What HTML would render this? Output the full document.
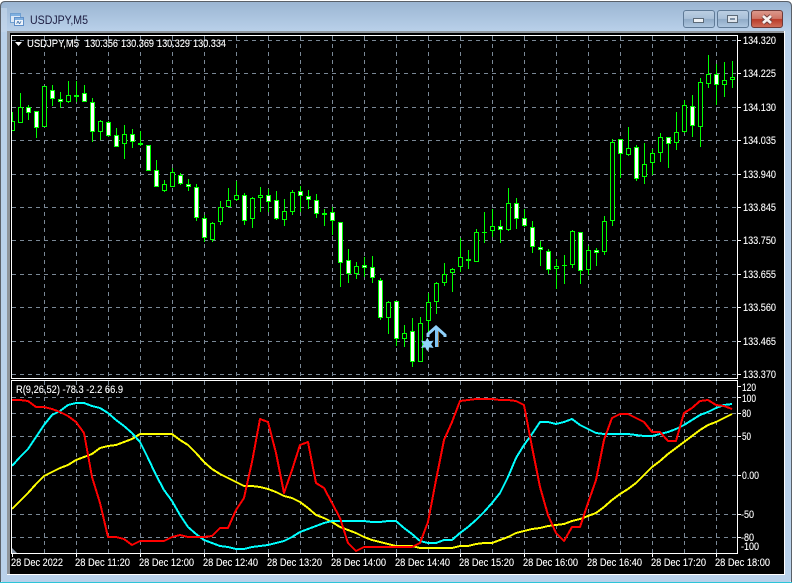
<!DOCTYPE html>
<html>
<head>
<meta charset="utf-8">
<title>USDJPY,M5</title>
<style>
html,body{margin:0;padding:0;background:#fff;width:795px;height:583px;overflow:hidden}
svg{display:block;position:absolute;left:0;top:0}
text{font-family:"Liberation Sans",sans-serif;font-size:11px;fill:#fff;stroke:#fff;stroke-width:.12px}
</style>
</head>
<body>
<svg width="795" height="583" viewBox="0 0 795 583" xmlns="http://www.w3.org/2000/svg">
<defs>
<linearGradient id="tb" x1="0" y1="0" x2="0" y2="1"><stop offset="0" stop-color="#9ab5d2"/><stop offset="1" stop-color="#bad1ea"/></linearGradient>
<linearGradient id="btn" x1="0" y1="0" x2="0" y2="1"><stop offset="0" stop-color="#bccfe3"/><stop offset=".48" stop-color="#a9c0d8"/><stop offset=".52" stop-color="#8fabc7"/><stop offset="1" stop-color="#b0c8e0"/></linearGradient>
<linearGradient id="cl" x1="0" y1="0" x2="0" y2="1"><stop offset="0" stop-color="#dc9a8e"/><stop offset=".48" stop-color="#cf7565"/><stop offset=".52" stop-color="#b93a28"/><stop offset="1" stop-color="#d0705c"/></linearGradient>
<clipPath id="mc"><rect x="12" y="36" width="725" height="342"/></clipPath>
<clipPath id="ic"><rect x="12" y="381" width="725" height="172"/></clipPath>
</defs>

<!-- window frame -->
<rect x="0" y="1" width="792" height="582" rx="5" fill="#b9d1ea"/>
<rect x="0" y="1" width="792" height="31" rx="5" fill="url(#tb)"/>
<path d="M0.5 583V6.5Q0.5 1.5 5.5 1.5H786.5Q791.5 1.5 791.5 6.5V583" fill="none" stroke="#5a6068"/>
<rect x="1" y="8" width="6" height="24" fill="#c3d6ea" opacity=".7"/>
<rect x="0" y="582" width="792" height="1" fill="#2cc4d8"/>

<!-- client -->
<rect x="7" y="31" width="778" height="544" fill="#fff"/>
<rect x="7" y="31" width="777" height="2" fill="#8f959b"/>
<rect x="7" y="31" width="3" height="543" fill="#8f959b"/>
<rect x="10" y="33" width="774" height="541" fill="#000"/>

<!-- grid -->
<g shape-rendering="crispEdges" stroke="#7a8896" stroke-width="1" stroke-dasharray="4 4" fill="none">
<path clip-path="url(#mc)" d="M44.5 36V378M76.5 36V378M108.5 36V378M140.5 36V378M172.5 36V378M204.5 36V378M236.5 36V378M268.5 36V378M300.5 36V378M332.5 36V378M364.5 36V378M396.5 36V378M428.5 36V378M460.5 36V378M492.5 36V378M524.5 36V378M556.5 36V378M588.5 36V378M620.5 36V378M652.5 36V378M684.5 36V378M716.5 36V378"/>
<path d="M12 40.5H737M12 73.5H737M12 107.5H737M12 140.5H737M12 174.5H737M12 207.5H737M12 240.5H737M12 274.5H737M12 307.5H737M12 341.5H737M12 374.5H737"/>
<path clip-path="url(#ic)" d="M44.5 381V553M76.5 381V553M108.5 381V553M140.5 381V553M172.5 381V553M204.5 381V553M236.5 381V553M268.5 381V553M300.5 381V553M332.5 381V553M364.5 381V553M396.5 381V553M428.5 381V553M460.5 381V553M492.5 381V553M524.5 381V553M556.5 381V553M588.5 381V553M620.5 381V553M652.5 381V553M684.5 381V553M716.5 381V553"/>
<path d="M12 397.5H737M12 413.5H737M12 436.5H737M12 475.5H737M12 514.5H737M12 537.5H737"/>
</g>

<!-- candles -->
<g clip-path="url(#mc)" shape-rendering="crispEdges" stroke="#00ff00" stroke-width="1">
<path fill="none" d="M12.5 112V131M20.5 93V123M28.5 105V120M36.5 111V138M44.5 86V127M52.5 85V106M60.5 92V108M68.5 81V103M76.5 81V102M84.5 85V102M92.5 98V142M100.5 120V140M108.5 121V137M116.5 128V147M124.5 125V159M132.5 129V148M140.5 131V146M148.5 145V171M156.5 160V187M164.5 180V192M172.5 168V187M180.5 173V185M188.5 179V191M196.5 184V221M204.5 215V242M212.5 222V242M220.5 201V225M228.5 188V207M236.5 181V201M244.5 193V225M252.5 197V228M260.5 187V212M268.5 189V212M276.5 191V220M284.5 199V226M292.5 190V215M300.5 186V212M308.5 190V209M316.5 194V218M324.5 209V226M332.5 207V235M340.5 222V287M348.5 249V283M356.5 262V279M364.5 257V277M372.5 256V283M380.5 278V320M388.5 301V334M396.5 301V346M404.5 325V347M412.5 318V367M420.5 317V362M428.5 293V334M436.5 282V314M444.5 263V286M452.5 268V292M460.5 238V272M468.5 250V269M476.5 229V262M484.5 212V243M492.5 209V237M500.5 220V243M508.5 188V231M516.5 198V229M524.5 209V227M532.5 221V253M540.5 241V266M548.5 249V274M556.5 259V289M564.5 255V284M572.5 230V268M580.5 232V284M588.5 246V275M596.5 248V266M604.5 216V255M612.5 139V226M620.5 139V178M628.5 127V156M636.5 145V181M644.5 143V184M652.5 149V175M660.5 133V162M668.5 137V168M676.5 112V150M684.5 100V133M692.5 95V137M700.5 78V147M708.5 55V88M716.5 64V105M724.5 62V97M732.5 61V88"/>
<path fill="#000" d="M10.5 121.5h4v9h-4zM18.5 107.5h4v15h-4zM42.5 86.5h4v40h-4zM66.5 95.5h4v6h-4zM74.5 95.5h4v1h-4zM98.5 121.5h4v10h-4zM122.5 134.5h4v9h-4zM162.5 184.5h4v6h-4zM170.5 172.5h4v14h-4zM210.5 223.5h4v16h-4zM218.5 207.5h4v14h-4zM226.5 200.5h4v6h-4zM234.5 195.5h4v4h-4zM250.5 198.5h4v20h-4zM258.5 195.5h4v2h-4zM282.5 211.5h4v8h-4zM290.5 192.5h4v19h-4zM322.5 213.5h4v1h-4zM354.5 266.5h4v7h-4zM386.5 302.5h4v15h-4zM402.5 333.5h4v5h-4zM418.5 323.5h4v38h-4zM426.5 302.5h4v18h-4zM434.5 283.5h4v18h-4zM442.5 274.5h4v8h-4zM450.5 269.5h4v3h-4zM458.5 257.5h4v9h-4zM474.5 232.5h4v29h-4zM490.5 226.5h4v4h-4zM506.5 203.5h4v26h-4zM554.5 266.5h4v2h-4zM570.5 231.5h4v33h-4zM586.5 250.5h4v19h-4zM602.5 221.5h4v30h-4zM610.5 142.5h4v78h-4zM626.5 148.5h4v6h-4zM642.5 164.5h4v12h-4zM650.5 153.5h4v9h-4zM658.5 137.5h4v15h-4zM674.5 132.5h4v10h-4zM682.5 105.5h4v26h-4zM698.5 82.5h4v44h-4zM706.5 74.5h4v9h-4zM722.5 80.5h4v4h-4zM730.5 77.5h4v2h-4z"/>
<path fill="#fff" d="M26.5 107.5h4v5h-4zM34.5 111.5h4v16h-4zM50.5 90.5h4v8h-4zM58.5 99.5h4v2h-4zM82.5 93.5h4v8h-4zM90.5 102.5h4v29h-4zM106.5 122.5h4v13h-4zM114.5 135.5h4v11h-4zM130.5 134.5h4v7h-4zM138.5 143.5h4v1h-4zM146.5 145.5h4v25h-4zM154.5 170.5h4v16h-4zM178.5 175.5h4v8h-4zM186.5 184.5h4v2h-4zM194.5 187.5h4v30h-4zM202.5 218.5h4v19h-4zM242.5 195.5h4v25h-4zM266.5 195.5h4v6h-4zM274.5 200.5h4v18h-4zM298.5 191.5h4v4h-4zM306.5 196.5h4v3h-4zM314.5 200.5h4v13h-4zM330.5 212.5h4v8h-4zM338.5 222.5h4v40h-4zM346.5 260.5h4v13h-4zM362.5 265.5h4v2h-4zM370.5 267.5h4v10h-4zM378.5 280.5h4v37h-4zM394.5 301.5h4v37h-4zM410.5 331.5h4v30h-4zM498.5 226.5h4v3h-4zM514.5 203.5h4v15h-4zM522.5 218.5h4v7h-4zM530.5 227.5h4v19h-4zM538.5 247.5h4v2h-4zM546.5 251.5h4v18h-4zM578.5 232.5h4v38h-4zM594.5 250.5h4v2h-4zM618.5 139.5h4v14h-4zM634.5 147.5h4v31h-4zM666.5 137.5h4v6h-4zM690.5 106.5h4v19h-4zM714.5 74.5h4v10h-4z"/>
<path fill="none" d="M466 259.5h5M466 260.5h5M482 232.5h5M562 265.5h5"/>
</g>

<!-- arrow + star -->
<g fill="none">
<path d="M438.5 328V347" stroke="#8a6a3a" stroke-width="1" shape-rendering="crispEdges"/>
<path d="M436.5 327V347" stroke="#7fc4f4" stroke-width="3" shape-rendering="crispEdges"/>
<path d="M428 337V334L436 327L445 335V337" stroke="#8fd0fa" stroke-width="3"/>
</g>
<path fill="#8fd2fb" d="M427.3 337.5L429.3 341.2L433.6 340.6L431.2 344.3L433.6 348L429.3 347.4L427.3 351.2L425.3 347.4L421 348L423.4 344.3L421 340.6L425.3 341.2Z"/>

<!-- indicator lines -->
<g clip-path="url(#ic)" fill="none" stroke-width="2" stroke-linejoin="round" shape-rendering="crispEdges">
<polyline stroke="#ffff00" points="12,509 20,501 28,493 36,484 44,476 52,472 60,468 68,465 76,460 84,457 92,454 100,448 108,446 116,445 124,442 132,439 140,434 148,434 156,434 164,434 172,434 180,440 188,445 196,453 204,462 212,469 220,474 228,478 236,482 244,486 252,486 260,487 268,489 276,492 284,496 292,498 300,502 308,508 316,515 324,518 332,522 340,527 348,530 356,533 364,537 372,540 380,542 388,544 396,546 404,546 412,546 420,548 428,548 436,548 444,548 452,548 460,546 468,546 476,544 484,543 492,543 500,540 508,537 516,533 524,531 532,529 540,528 548,526 556,525 564,524 572,521 580,519 588,516 596,513 604,507 612,500 620,494 628,489 636,483 644,475 652,467 660,461 668,454 676,448 684,442 692,436 700,430 708,425 716,422 724,418 732,414"/>
<polyline stroke="#00ffff" points="12,466 20,457 28,449 36,437 44,425 52,415 60,411 68,405 76,403 84,403 92,406 100,408 108,413 116,420 124,426 132,433 140,442 148,458 156,475 164,490 172,501 180,515 188,527 196,534 204,540 212,543 220,546 228,547 236,549 244,549 252,547 260,546 268,545 276,543 284,541 292,537 300,532 308,529 316,526 324,523 332,521 340,521 348,521 356,521 364,521 372,522 380,522 388,521 396,521 404,528 412,534 420,541 428,543 436,543 444,540 452,540 460,533 468,527 476,520 484,512 492,503 500,493 508,477 516,458 524,445 532,434 540,422 548,422 556,424 564,422 572,419 580,425 588,429 596,433 604,434 612,434 620,434 628,434 636,435 644,436 652,436 660,434 668,432 676,429 684,425 692,420 700,415 708,412 716,408 724,405 732,404"/>
<polyline stroke="#ff0000" points="12,400 20,400 28,401 36,407 44,407 52,409 60,412 68,416 76,422 84,433 92,477 100,503 108,537 116,537 124,539 132,545 140,541 148,541 156,541 164,541 172,537 180,535 188,537 196,537 204,537 212,536 220,528 228,528 236,510 244,498 252,462 260,419 268,422 276,453 284,493 292,470 300,445 308,442 316,483 324,488 332,503 340,518 348,543 356,551 364,547 372,547 380,547 388,547 396,547 404,547 412,547 420,543 428,522 436,480 444,440 452,422 460,401 468,400 476,399 484,399 492,399 500,400 508,400 516,401 524,405 532,447 540,487 548,515 556,533 564,541 572,527 580,527 588,503 596,480 604,440 612,418 620,414 628,414 636,418 644,422 652,432 660,432 668,441 676,441 684,413 692,408 700,401 708,400 716,405 724,406 732,409"/>
</g>

<!-- borders -->
<g shape-rendering="crispEdges" fill="none" stroke="#fff">
<rect x="11.5" y="35.5" width="726" height="343"/>
<rect x="11.5" y="380.5" width="726" height="173"/>
<path d="M738 40.5h3M738 73.5h3M738 107.5h3M738 140.5h3M738 174.5h3M738 207.5h3M738 240.5h3M738 274.5h3M738 307.5h3M738 341.5h3M738 374.5h3M738 397.5h3M738 413.5h3M738 436.5h3M738 475.5h3M738 514.5h3M738 537.5h3M738 386.5h3M12.5 554v3M76.5 554v3M140.5 554v3M204.5 554v3M268.5 554v3M332.5 554v3M396.5 554v3M460.5 554v3M524.5 554v3M588.5 554v3M652.5 554v3M716.5 554v3"/>
</g>
<path d="M12 548L17 553H12Z" fill="#8a97a6"/>
<path d="M15 42H22L18.500 46Z" fill="#fff"/>

<!-- labels -->
<text x="27" y="47" textLength="52" lengthAdjust="spacingAndGlyphs">USDJPY,M5</text>
<text x="85" y="47" textLength="33" lengthAdjust="spacingAndGlyphs">130.356</text>
<text x="121" y="47" textLength="33" lengthAdjust="spacingAndGlyphs">130.369</text>
<text x="157" y="47" textLength="33" lengthAdjust="spacingAndGlyphs">130.329</text>
<text x="193" y="47" textLength="33" lengthAdjust="spacingAndGlyphs">130.334</text>
<text x="16" y="393" textLength="107" lengthAdjust="spacingAndGlyphs">R(9,26,52) -78.3 -2.2 66.9</text>

<text x="743" y="44" textLength="33" lengthAdjust="spacingAndGlyphs">134.320</text>
<text x="743" y="77" textLength="33" lengthAdjust="spacingAndGlyphs">134.225</text>
<text x="743" y="111" textLength="33" lengthAdjust="spacingAndGlyphs">134.130</text>
<text x="743" y="144" textLength="33" lengthAdjust="spacingAndGlyphs">134.035</text>
<text x="743" y="178" textLength="33" lengthAdjust="spacingAndGlyphs">133.940</text>
<text x="743" y="211" textLength="33" lengthAdjust="spacingAndGlyphs">133.845</text>
<text x="743" y="244" textLength="33" lengthAdjust="spacingAndGlyphs">133.750</text>
<text x="743" y="278" textLength="33" lengthAdjust="spacingAndGlyphs">133.655</text>
<text x="743" y="311" textLength="33" lengthAdjust="spacingAndGlyphs">133.560</text>
<text x="743" y="345" textLength="33" lengthAdjust="spacingAndGlyphs">133.465</text>
<text x="743" y="378" textLength="33" lengthAdjust="spacingAndGlyphs">133.370</text>

<text x="742" y="391" textLength="14" lengthAdjust="spacingAndGlyphs">120</text>
<text x="742" y="402" textLength="14" lengthAdjust="spacingAndGlyphs">100</text>
<text x="742" y="417" textLength="9" lengthAdjust="spacingAndGlyphs">80</text>
<text x="742" y="440" textLength="9" lengthAdjust="spacingAndGlyphs">50</text>
<text x="742" y="479" textLength="17" lengthAdjust="spacingAndGlyphs">0.00</text>
<text x="741" y="518" textLength="13" lengthAdjust="spacingAndGlyphs">-50</text>
<text x="741" y="541" textLength="13" lengthAdjust="spacingAndGlyphs">-80</text>
<text x="741" y="550" textLength="18" lengthAdjust="spacingAndGlyphs">-100</text>

<text x="11" y="566" textLength="52" lengthAdjust="spacingAndGlyphs">28 Dec 2022</text>
<text x="75" y="566" textLength="55" lengthAdjust="spacingAndGlyphs">28 Dec 11:20</text>
<text x="139" y="566" textLength="55" lengthAdjust="spacingAndGlyphs">28 Dec 12:00</text>
<text x="203" y="566" textLength="55" lengthAdjust="spacingAndGlyphs">28 Dec 12:40</text>
<text x="267" y="566" textLength="55" lengthAdjust="spacingAndGlyphs">28 Dec 13:20</text>
<text x="331" y="566" textLength="55" lengthAdjust="spacingAndGlyphs">28 Dec 14:00</text>
<text x="395" y="566" textLength="55" lengthAdjust="spacingAndGlyphs">28 Dec 14:40</text>
<text x="459" y="566" textLength="55" lengthAdjust="spacingAndGlyphs">28 Dec 15:20</text>
<text x="523" y="566" textLength="55" lengthAdjust="spacingAndGlyphs">28 Dec 16:00</text>
<text x="587" y="566" textLength="55" lengthAdjust="spacingAndGlyphs">28 Dec 16:40</text>
<text x="651" y="566" textLength="55" lengthAdjust="spacingAndGlyphs">28 Dec 17:20</text>
<text x="715" y="566" textLength="55" lengthAdjust="spacingAndGlyphs">28 Dec 18:00</text>

<!-- title -->
<text x="30" y="24" textLength="58" lengthAdjust="spacingAndGlyphs" style="font-size:11.5px;fill:#1c1c40;stroke:none">USDJPY,M5</text>
<g shape-rendering="crispEdges">
<rect x="10.500" y="13.500" width="10" height="9" fill="#dce8f6" stroke="#6f9fd0"/>
<rect x="11" y="14" width="9" height="2" fill="#7fb0e0"/>
<rect x="14.500" y="17.500" width="9" height="8" fill="#eef4fb" stroke="#5f8fc8"/>
<rect x="15" y="18" width="8" height="2" fill="#80b0e0"/>
<path d="M16.500 23.500l1.500-2 1.500 2 1.500-2" fill="none" stroke="#4a7ab0"/>
</g>

<!-- buttons -->
<rect x="683.500" y="10.500" width="31" height="17" rx="2.500" fill="url(#btn)" stroke="#5f7a96"/>
<rect x="717.500" y="10.500" width="31" height="17" rx="2.500" fill="url(#btn)" stroke="#5f7a96"/>
<rect x="751.500" y="10.500" width="31" height="17" rx="2.500" fill="url(#cl)" stroke="#6e3a38"/>
<rect x="693.500" y="18.500" width="10" height="4" fill="#eef2f6" stroke="#5c6a78" shape-rendering="crispEdges"/>
<rect x="727.500" y="15.500" width="10" height="7" fill="#dfe6ee" stroke="#5c6a78" shape-rendering="crispEdges"/>
<rect x="730" y="18" width="5" height="2" fill="#7b8ea2" shape-rendering="crispEdges"/>
<path d="M763 16L771 23M771 16L763 23" stroke="#6d3b3a" stroke-width="4.500" fill="none"/>
<path d="M763 16L771 23M771 16L763 23" stroke="#f6f1f0" stroke-width="2.800" fill="none"/>
</svg>
</body>
</html>
